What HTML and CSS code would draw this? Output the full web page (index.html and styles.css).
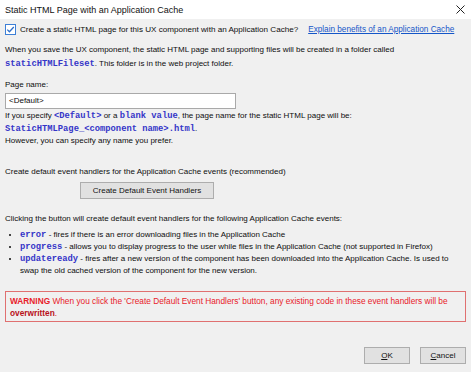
FILE: index.html
```html
<!DOCTYPE html>
<html>
<head>
<meta charset="utf-8">
<link rel="stylesheet" href="styles.css">
</head>
<body>
<div class="dialog">
  <div class="titlebar">
    <span class="title">Static HTML Page with an Application Cache</span>
    <svg class="close" width="9" height="9" viewBox="0 0 9 9"><path d="M0.5 0.5L8.5 8.5M8.5 0.5L0.5 8.5" stroke="#222" stroke-width="1"/></svg>
  </div>
  <div class="content">
    <div class="checkrow">
      <svg class="cb" width="11" height="11" viewBox="0 0 11 11"><rect x="0.5" y="0.5" width="10" height="10" fill="#fff" stroke="#3d7fd6"/><path d="M2.3 5.6L4.4 7.7L8.8 3.0" fill="none" stroke="#2e6fc9" stroke-width="1.3"/></svg>
      <span class="cbtext">Create a static HTML page for this UX component with an Application Cache?</span>
      <a class="link">Explain benefits of an Application Cache</a>
    </div>
    <p class="para p1">When you save the UX component, the static HTML page and supporting files will be created in a folder called<br><code>staticHTMLFileset</code>. This folder is in the web project folder.</p>
    <div class="label">Page name:</div>
    <div class="input">&lt;Default&gt;</div>
    <p class="para p2">If you specify <code>&lt;Default&gt;</code> or a <code>blank value</code>, the page name for the static HTML page will be:<br><code>StaticHTMLPage_&lt;component name&gt;.html</code>.<br>However, you can specify any name you prefer.</p>
    <p class="para p3">Create default event handlers for the Application Cache events (recommended)</p>
    <div class="btnrow"><div class="btn wide">Create Default Event Handlers</div></div>
    <p class="para p4">Clicking the button will create default event handlers for the following Application Cache events:</p>
    <ul class="events">
      <li><code>error</code> - fires if there is an error downloading files in the Application Cache</li>
      <li><code>progress</code> - allows you to display progress to the user while files in the Application Cache (not supported in Firefox)</li>
      <li><code>updateready</code> - fires after a new version of the component has been downloaded into the Application Cache. Is used to swap the old cached version of the component for the new version.</li>
    </ul>
    <div class="warning"><b>WARNING</b> When you click the 'Create Default Event Handlers' button, any existing code in these event handlers will be <b class="dark">overwritten</b>.</div>
    <div class="footer">
      <div class="btn small"><u>O</u>K</div>
      <div class="btn small"><u>C</u>ancel</div>
    </div>
  </div>
</div>
</body>
</html>
```
FILE: styles.css
```css
html, body {
  margin: 0;
  padding: 0;
  background: #ffffff;
}
body {
  width: 474px;
  height: 374px;
  overflow: hidden;
  font-family: "Liberation Sans", Arial, sans-serif;
  font-size: 8px;
  color: #0d0d0d;
}
.dialog {
  width: 471px;
  height: 372px;
  background: #f0f0f0;
  display: flex;
  flex-direction: column;
}
.titlebar {
  height: 19px;
  background: #ffffff;
  display: flex;
  align-items: center;
  justify-content: space-between;
  padding: 0 6px 0 5px;
  flex-shrink: 0;
}
.title {
  font-size: 9px;
  color: #111;
}
.close {
  display: block;
}
.content {
  padding: 0 5px 0 5px;
  display: flex;
  flex-direction: column;
}
.checkrow {
  height: 14px;
  margin-top: 3px;
  display: flex;
  align-items: center;
}
.cb {
  display: block;
  margin-right: 4px;
}
.cbtext {
  font-size: 8.1px;
}
.link {
  color: #1456c8;
  text-decoration: underline;
  margin-left: 10px;
  font-size: 8.2px;
}
.para {
  margin: 0;
  line-height: 13px;
}
code {
  font-family: "Liberation Mono", "Courier New", monospace;
  font-weight: bold;
  color: #3535c8;
  font-size: 8.8px;
  line-height: 1;
}
.p1 { margin-top: 7px; line-height: 14px; }
.label { margin-top: 8px; line-height: 12px; }
.input {
  width: 226px;
  height: 14px;
  line-height: 14px;
  background: #fff;
  border: 1px solid #a9a9a9;
  padding-left: 3px;
  margin-top: 2px;
}
.p2 { margin-top: 1px; line-height: 12.5px; }
.p3 { margin-top: 17px; }
.btnrow {
  padding-left: 75px;
  margin-top: 4px;
}
.btn {
  background: #e1e1e1;
  border: 1px solid #adadad;
  text-align: center;
  color: #111;
}
.wide {
  width: 132px;
  height: 15px;
  line-height: 15px;
}
.p4 { margin-top: 13px; }
.events {
  margin: 4px 0 0 0;
  padding: 0 8px 0 15px;
  line-height: 12px;
}
.warning {
  margin-top: 14px;
  border: 1px solid #e07070;
  color: #e8202a;
  padding: 3px 5px 2px 4px;
  line-height: 12px;
  height: 24px;
  font-size: 8.3px;
}
.warning b { color: #e8202a; }
.warning b.dark { color: #b8101a; }
.footer {
  display: flex;
  justify-content: flex-end;
  gap: 10px;
  margin-top: 25px;
}
.small {
  width: 44px;
  height: 15px;
  line-height: 15px;
}
```
